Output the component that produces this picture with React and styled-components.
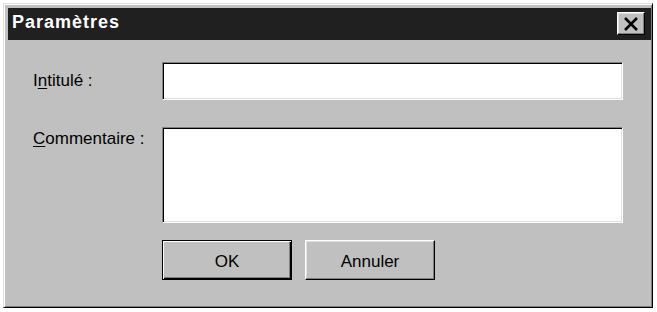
import styled, { createGlobalStyle } from 'styled-components';

const GlobalStyle = createGlobalStyle`
  html, body {
    margin: 0;
    padding: 0;
    background: #ffffff;
  }
  body {
    font-family: "Liberation Sans", Arial, sans-serif;
  }
`;

const Page = styled.div`
  padding: 3px 4px 4px 3px;
`;

const Window = styled.div`
  width: 650px;
  height: 305px;
  box-sizing: border-box;
  background: #c0c0c0;
  border: 1px solid;
  border-color: #dfdfdf #000000 #000000 #dfdfdf;
  box-shadow: inset 1px 1px #ffffff, inset -1px -1px #808080;
  padding: 4px 1px 2px 4px;
  display: flex;
  flex-direction: column;
`;

const TitleBar = styled.div`
  height: 32px;
  background: #202020;
  display: flex;
  align-items: center;
  justify-content: space-between;
  padding: 0 6px 0 4px;
`;

const Title = styled.span`
  color: #ffffff;
  font-weight: bold;
  font-size: 18px;
  letter-spacing: 1px;
  padding-bottom: 3px;
`;

const CloseButton = styled.button`
  width: 28px;
  height: 23px;
  box-sizing: border-box;
  margin: -1px 0 0 0;
  padding: 0;
  background: #c0c0c0;
  border: 1px solid;
  border-color: #ffffff #000000 #000000 #ffffff;
  box-shadow: inset -1px -1px #808080, inset 1px 1px #dfdfdf;
  display: flex;
  align-items: center;
  justify-content: center;
`;

const Form = styled.div`
  display: grid;
  grid-template-columns: 129px 461px;
  grid-template-rows: 38px 96px 40px;
  row-gap: 27px;
  padding: 22px 0 0 25px;
`;

const Label = styled.label`
  font-size: 17px;
  color: #000000;
  align-self: ${(p) => (p.$top ? 'start' : 'center')};
  padding-top: ${(p) => (p.$top ? '2px' : '0')};
  padding-bottom: ${(p) => (p.$top ? '0' : '1px')};
`;

const Key = styled.span`
  text-decoration: underline;
  text-underline-offset: 2px;
`;

const Field = styled.div`
  box-sizing: border-box;
  background: #ffffff;
  border: 1px solid;
  border-color: #808080 #ffffff #ffffff #808080;
  box-shadow: inset 1px 1px #000000, inset -1px -1px #dfdfdf;
`;

const Actions = styled.div`
  grid-column: 2;
  display: flex;
  gap: 13px;
  margin-top: -10px;
`;

const Button = styled.button`
  width: 130px;
  height: 40px;
  box-sizing: border-box;
  margin: 0;
  background: #c0c0c0;
  font-family: "Liberation Sans", Arial, sans-serif;
  font-size: 17px;
  color: #000000;
  border: 1px solid;
  border-color: ${(p) => (p.$default ? '#000000' : '#ffffff #000000 #000000 #ffffff')};
  box-shadow: ${(p) =>
    p.$default
      ? 'inset 1px 1px #ffffff, inset -1px -1px #000000, inset -2px -2px #808080'
      : 'inset -1px -1px #808080, inset 1px 1px #dfdfdf'};
  padding: 3px 0 0 0;
`;

export default function App() {
  return (
    <>
      <GlobalStyle />
      <Page>
        <Window>
          <TitleBar>
            <Title>Paramètres</Title>
            <CloseButton aria-label="Fermer">
              <svg width="16" height="14" viewBox="0 0 16 14">
                <path d="M2 1 L14 13 M14 1 L2 13" stroke="#000" strokeWidth="2.6" fill="none" />
              </svg>
            </CloseButton>
          </TitleBar>
          <Form>
            <Label>
              I<Key>n</Key>titulé :
            </Label>
            <Field />
            <Label $top>
              <Key>C</Key>ommentaire :
            </Label>
            <Field />
            <Actions>
              <Button $default>OK</Button>
              <Button>Annuler</Button>
            </Actions>
          </Form>
        </Window>
      </Page>
    </>
  );
}
